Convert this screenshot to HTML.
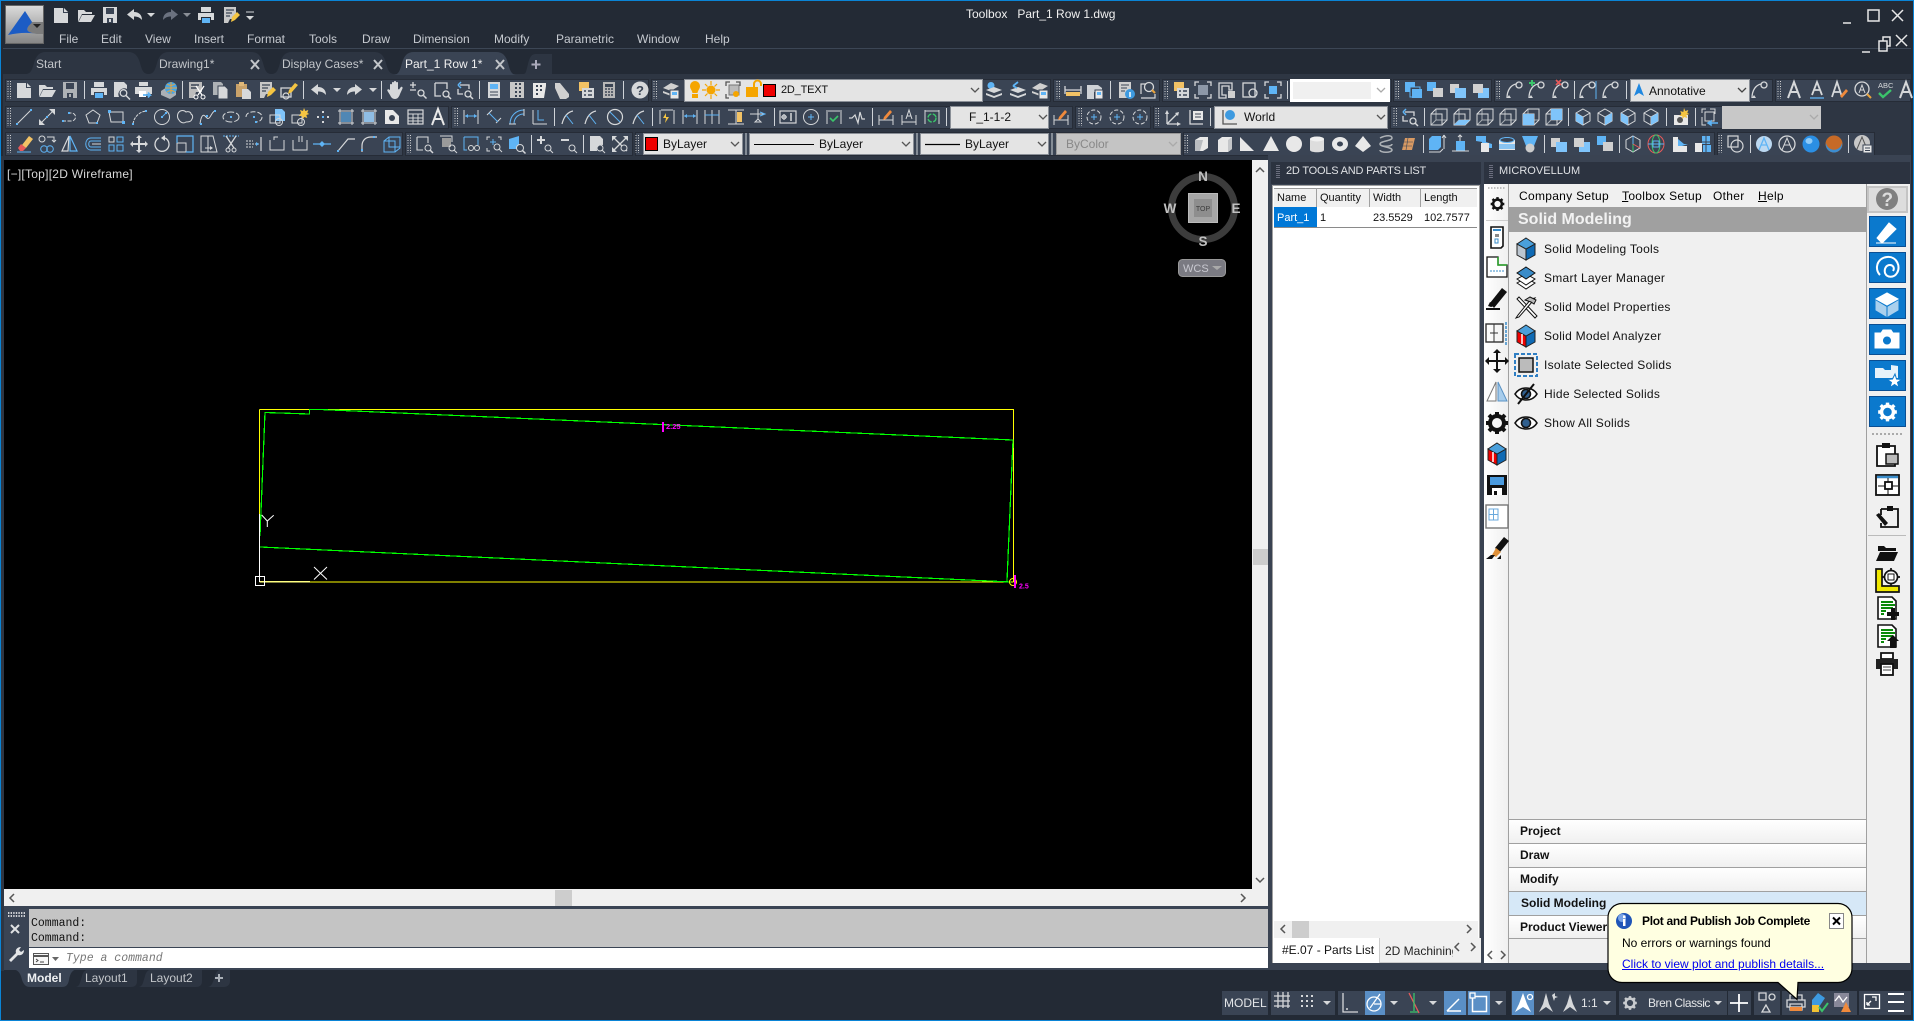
<!DOCTYPE html>
<html lang="en"><head><meta charset="utf-8"><title>Toolbox Part_1 Row 1.dwg</title>
<style>
html,body{margin:0;padding:0;background:#232a35}
#r{position:relative;width:1914px;height:1021px;overflow:hidden;background:#232a35;font:12px/16px "Liberation Sans",sans-serif;color:#d0d3d8}
#r div{position:absolute;box-sizing:border-box}
.t{white-space:nowrap;height:16px}
.tb{background:#3a4454;border:1px solid #262c37;height:23px}
.c{background:#e4e4e4;border:1px solid #8a8f97}
.b{background:linear-gradient(#fff,#f0f0f0);border-top:1px solid #a0a0a0;left:1509px;width:357px;height:24px}
.bb{font-weight:bold;color:#111;left:1520px}
.ml{color:#c6cad0}
.li{color:#111;left:1544px;letter-spacing:.27px}
.th{color:#111;font-size:11px}
.mb{color:#000;top:188px;letter-spacing:.3px}
.bl{background:#0b79cd;border:1px solid #0a4f93;left:1869px;width:37px;height:31px}
.st{background:#3a4454;top:991px;height:24px}
.act{background:#5a8fc6;top:991px;height:24px}
svg{position:absolute;left:0;top:0}
</style></head><body><div id="r">
<!-- frame -->
<div style="left:0;top:0;width:1914px;height:1021px;border:1px solid #0a84d6;z-index:9;pointer-events:none"></div>
<!-- top areas -->
<div style="left:3px;top:48px;width:1908px;height:1px;background:#3c4655"></div>
<div style="left:3px;top:74px;width:1908px;height:86px;background:#2e3643"></div>
<!-- toolbars row 1 -->
<div class="tb" style="left:5px;top:79px;width:644px"></div>
<div class="tb" style="left:651px;top:79px;width:400px"></div>
<div class="tb" style="left:1053px;top:79px;width:107px"></div>
<div class="tb" style="left:1162px;top:79px;width:230px"></div>
<div class="tb" style="left:1393px;top:79px;width:99px"></div>
<div class="tb" style="left:1494px;top:79px;width:279px"></div>
<div class="tb" style="left:1775px;top:79px;width:136px"></div>
<div class="c" style="left:684px;top:79px;width:299px;height:23px"></div>
<div style="left:1290px;top:79px;width:100px;height:23px;background:#fff"></div>
<div style="left:1293px;top:82px;width:78px;height:17px;background:#f0f0f0"></div>
<div class="c" style="left:1630px;top:79px;width:120px;height:23px"></div>
<!-- row 2 -->
<div class="tb" style="left:5px;top:106px;width:444px"></div>
<div class="tb" style="left:451px;top:106px;width:622px"></div>
<div class="tb" style="left:1075px;top:106px;width:76px"></div>
<div class="tb" style="left:1153px;top:106px;width:235px"></div>
<div class="tb" style="left:1390px;top:106px;width:431px"></div>
<div class="c" style="left:950px;top:106px;width:99px;height:23px"></div>
<div class="c" style="left:1214px;top:106px;width:174px;height:23px"></div>
<div style="left:1722px;top:106px;width:99px;height:23px;background:#c8c8c8"></div>
<!-- row 3 -->
<div class="tb" style="left:5px;top:132px;width:398px;height:24px"></div>
<div class="tb" style="left:405px;top:132px;width:228px;height:24px"></div>
<div class="tb" style="left:635px;top:132px;width:546px;height:24px"></div>
<div class="tb" style="left:1183px;top:132px;width:532px;height:24px"></div>
<div class="tb" style="left:1717px;top:132px;width:158px;height:24px"></div>
<div class="c" style="left:643px;top:133px;width:100px;height:22px"></div>
<div class="c" style="left:749px;top:133px;width:165px;height:22px"></div>
<div class="c" style="left:920px;top:133px;width:129px;height:22px"></div>
<div style="left:1056px;top:133px;width:125px;height:22px;background:#c4c4c4;border:1px solid #999"></div>
<!-- canvas -->
<div style="left:1px;top:156px;width:3px;height:815px;background:#2e3643"></div>
<div style="left:4px;top:160px;width:1248px;height:729px;background:#000"></div>
<div style="left:1252px;top:160px;width:16px;height:729px;background:#f0f0f0"></div>
<div style="left:1253px;top:549px;width:15px;height:16px;background:#cdcdcd"></div>
<div style="left:4px;top:889px;width:1264px;height:17px;background:#f0f0f0"></div>
<div style="left:555px;top:890px;width:17px;height:16px;background:#cdcdcd"></div>
<!-- command -->
<div style="left:4px;top:906px;width:1264px;height:64px;background:#3a4454"></div>
<div style="left:29px;top:909px;width:1239px;height:38px;background:#c4c4c4"></div>
<div style="left:29px;top:948px;width:1239px;height:20px;background:#fff"></div>
<!-- right panels base -->
<div style="left:1268px;top:155px;width:643px;height:815px;background:#3a4352"></div>
<div style="left:1271px;top:162px;width:210px;height:22px;background:#2c3340"></div>
<div style="left:1484px;top:162px;width:426px;height:22px;background:#2c3340"></div>
<!-- parts list -->
<div style="left:1272px;top:185px;width:208px;height:778px;background:#fff;border:1px solid #a0a0a0;border-bottom:0"></div>
<div style="left:1274px;top:188px;width:203px;height:19px;background:#f0f0f0;border-top:1px solid #999"></div>
<div style="left:1316px;top:188px;width:1px;height:19px;background:#a0a0a0"></div>
<div style="left:1369px;top:188px;width:1px;height:19px;background:#a0a0a0"></div>
<div style="left:1420px;top:188px;width:1px;height:19px;background:#a0a0a0"></div>
<div style="left:1274px;top:207px;width:43px;height:20px;background:#0078d7"></div>
<div style="left:1274px;top:227px;width:203px;height:1px;background:#8a8a8a"></div>
<div style="left:1274px;top:921px;width:204px;height:17px;background:#f0f0f0"></div>
<div style="left:1292px;top:921px;width:17px;height:17px;background:#cdcdcd"></div>
<div style="left:1273px;top:938px;width:106px;height:25px;background:#fff"></div>
<div style="left:1379px;top:938px;width:102px;height:25px;background:#f0f0f0;border-left:1px solid #ccc;border-bottom:1px solid #ccc"></div>
<!-- microvellum -->
<div style="left:1484px;top:184px;width:25px;height:779px;background:linear-gradient(90deg,#fff,#f0f0f0);border-right:1px solid #a0a0a0"></div>
<div style="left:1509px;top:184px;width:357px;height:779px;background:#f0f0f0"></div>
<div style="left:1509px;top:207px;width:357px;height:25px;background:#a0a0a0"></div>
<div class="b" style="top:819px"></div>
<div class="b" style="top:843px"></div>
<div class="b" style="top:867px"></div>
<div class="b" style="top:891px;background:#d6e8f7"></div>
<div class="b" style="top:915px;border-bottom:1px solid #a0a0a0"></div>
<div style="left:1866px;top:184px;width:44px;height:779px;background:#f0f0f0;border-left:1px solid #a0a0a0"></div>
<div style="left:1867px;top:186px;width:41px;height:27px;background:#ddd;border:2px solid #c4c4c4"></div>
<div class="bl" style="top:216px"></div>
<div class="bl" style="top:252px"></div>
<div class="bl" style="top:288px"></div>
<div class="bl" style="top:324px"></div>
<div class="bl" style="top:360px"></div>
<div class="bl" style="top:396px"></div>
<div style="left:1868px;top:535px;width:38px;height:1px;background:#bbb"></div>
<div style="left:1486px;top:220px;width:22px;height:1px;background:#ccc"></div>
<!-- status -->
<div class="st" style="left:1222px;width:46px"></div>
<div class="st" style="left:1271px;width:64px"></div>
<div class="st" style="left:1338px;width:168px"></div>
<div class="st" style="left:1511px;width:105px"></div>
<div class="st" style="left:1619px;width:108px"></div>
<div class="st" style="left:1728px;width:23px"></div>
<div class="st" style="left:1754px;width:26px"></div>
<div class="st" style="left:1782px;width:75px"></div>
<div class="st" style="left:1859px;width:52px"></div>
<div class="act" style="left:1365px;width:20px"></div>
<div class="act" style="left:1444px;width:22px"></div>
<div class="act" style="left:1468px;width:22px"></div>
<div class="act" style="left:1512px;width:22px"></div>

<svg width="1914" height="1021" xmlns="http://www.w3.org/2000/svg" style="color:#d6d8da" fill="none">
<defs>
<g id="gr" transform="translate(-2 -9)"><path d="M1 0v18M3.500 0v18" stroke="#d8d8d8" stroke-width="1" stroke-dasharray="1 1.500"/></g>
<g id="s" transform="translate(-1 -9)"><path d="M.5 0v18" stroke="#cfd3d8"/></g>
<g id="dd" transform="translate(-10 -10)"><path d="M6 8h8l-4 4z" fill="currentColor"/></g>
<g id="ch" transform="translate(-10 -10)"><path d="M6 8l4 4 4-4" stroke="currentColor" stroke-width="1.300"/></g>
<g id="new" transform="translate(-10 -10)"><path fill="currentColor" d="M3 3h10l4 4v11H3z"/><path d="M12.500 3v4.500H17" stroke="#3a4454"/></g>
<g id="open" transform="translate(-10 -10)"><path fill="currentColor" d="M2 5h6l2 2h6v2H6l-4 8zM6 10h13l-4 7H2.500z"/></g>
<g id="save" transform="translate(-10 -10)"><path fill="currentColor" d="M3 2h14v16H3z"/><path fill="#3a4454" d="M6 3h8v6H6zM7 13h6v5H7z"/><path fill="currentColor" d="M9 14h2v3H9z"/></g>
<g id="print" transform="translate(-10 -10)"><path fill="currentColor" d="M5 2h10v5H5zM2 8h16v7h-3v-3H5v3H2z"/><rect x="6" y="13" width="8" height="5" fill="#5fb4f5"/></g>
<g id="prev" transform="translate(-10 -10)"><path fill="currentColor" d="M2 2h10l3 3v4a6 6 0 0 0-8 8H2z"/><circle cx="11.500" cy="13" r="3.300" stroke="currentColor" stroke-width="1.300"/><path d="M14 15.500l4 4" stroke="currentColor" stroke-width="1.500"/></g>
<g id="plot" transform="translate(-10 -10)"><path fill="currentColor" d="M5 2h9v4H5zM1 7h17v7H1z"/><rect x="5" y="11" width="7" height="6" fill="#fff"/><path d="M9 15h7l-2-2.500M16 15l-2 2.500" stroke="#5fb4f5" stroke-width="1.800"/></g>
<g id="pub" transform="translate(-10 -10)"><path fill="#aab0b6" d="M2 11l9-6 6 3v7l-6 4-9-4z"/><circle cx="12" cy="8" r="6" fill="#45a6e8"/><path d="M6 8h12M12 2v12M8 4c3 2 5 2 8 0M8 12c3-2 5-2 8 0" stroke="#e8a33c"/></g>
<g id="cut" transform="translate(-10 -10)"><path fill="#bdbdbd" d="M2 2h13v10H9l-2 6H2z"/><path d="M4 5h8M4 8h6" stroke="#3a4454" stroke-width="1.500"/><path d="M9 6l6 9M17 6l-6 9" stroke="#fff" stroke-width="1.300"/><circle cx="9" cy="17" r="2" stroke="#fff"/><circle cx="16" cy="17" r="2" stroke="#fff"/></g>
<g id="copy" transform="translate(-10 -10)"><path fill="#aeb2b6" d="M3 2h8l2 2v11H3z"/><path fill="currentColor" stroke="#3a4454" d="M8 6h7l3 3v10H8z"/></g>
<g id="paste" transform="translate(-10 -10)"><path fill="#c9a26a" d="M3 4h11v13H3z"/><path fill="#e0b878" d="M6 2h5v4H6z"/><path fill="currentColor" d="M9 9h6l3 3v7H9z"/></g>
<g id="match" transform="translate(-10 -10)"><path fill="#c8c8c8" d="M3 2h12v12H9l-2 4H3z"/><path d="M5 5h8M5 8h6M5 11h4" stroke="#3a4454" stroke-width="1.300"/><path fill="#f5c542" d="M11 12l5-5 3 3-5 5-4 2z"/></g>
<g id="bed" transform="translate(-10 -10)"><path d="M2 8h10v9H2z" stroke="currentColor" stroke-width="1.300"/><circle cx="7" cy="16" r="3" stroke="currentColor" stroke-width="1.200"/><path fill="#f5c542" d="M10 10l6-7 3 2-6 7-4 2z"/></g>
<g id="undo" transform="translate(-10 -10)"><path fill="currentColor" d="M9 4L2 9.500 9 15v-3.500c3 0 5.500.5 8 3.500 0-5-3-8-8-8z"/></g>
<g id="redo" transform="translate(10 -10) scale(-1 1)"><path fill="currentColor" d="M9 4L2 9.500 9 15v-3.500c3 0 5.500.5 8 3.500 0-5-3-8-8-8z"/></g>
<g id="pan" transform="translate(-10 -10)"><path fill="currentColor" d="M5 10V5c0-1.500 2-1.500 2 0v3V3c0-1.500 2-1.500 2 0v5-6c0-1.500 2-1.500 2 0v6-5c0-1.500 2-1.500 2 0v6l1 .5 1.500-2c1-1.500 2.500-.5 2 1L15 14c-1 3-2.500 5-5 5-3 0-4-2-5-4l-2.500-4c-.8-1.500 1-2.500 2-1.200z"/></g>
<g id="zrt" transform="translate(-10 -10)"><path d="M5 2v6M2 5h6M2 10h6" stroke="currentColor" stroke-width="1.300"/><circle cx="13" cy="13" r="3" stroke="currentColor" stroke-width="1.300"/><path d="M15.500 15.500l3 3" stroke="currentColor" stroke-width="1.500"/></g>
<g id="zwin" transform="translate(-10 -10)"><path d="M3 3h12v6M3 3v13h6" stroke="currentColor" stroke-width="1.300"/><circle cx="14" cy="14" r="3" stroke="currentColor" stroke-width="1.300"/><path d="M16 16l3 3" stroke="currentColor" stroke-width="1.500"/></g>
<g id="zpr" transform="translate(-10 -10)"><path d="M5 5h9v4M3 9V14h5" stroke="currentColor" stroke-width="1.300"/><path d="M3 5l3-3M3 5l3 3" stroke="#5fb4f5" stroke-width="1.500"/><circle cx="13" cy="14" r="3" stroke="currentColor" stroke-width="1.300"/><path d="M15 16l3 3" stroke="currentColor" stroke-width="1.500"/></g>
<g id="prp" transform="translate(-10 -10)"><rect x="4" y="2" width="12" height="16" fill="#d6d8da"/><rect x="6" y="4" width="8" height="5" fill="#5fb4f5"/><path d="M6 12h8M6 15h8" stroke="#3a4454"/></g>
<g id="dc" transform="translate(-10 -10)"><rect x="3" y="2" width="14" height="16" fill="#c8c8c8"/><path d="M8 4h2M12 4h2M8 8h2M12 8h2M8 12h2M12 12h2M8 16h2M12 16h2" stroke="#3a4454" stroke-width="2"/></g>
<g id="tp" transform="translate(-10 -10)"><path fill="#e8e8e8" d="M3 3h13v3l-2 12H3z"/><path d="M6 6h2M10 6h2M6 10h2M10 10h2M6 14h2" stroke="#3a4454" stroke-width="2"/></g>
<g id="sh" transform="translate(-10 -10)"><path fill="#d0d0d0" d="M3 3h5l9 11v3l-3 2H8L3 8z"/></g>
<g id="mk" transform="translate(-10 -10)"><rect x="3" y="2" width="10" height="9" fill="#f2c265"/><rect x="6" y="8" width="12" height="10" fill="#d6d8da"/><path d="M8 11h2M12 11h4M8 15h2M12 15h4" stroke="#3a4454" stroke-width="1.500"/></g>
<g id="calc" transform="translate(-10 -10)"><rect x="4" y="2" width="12" height="16" fill="#b8b8b8"/><rect x="6" y="4" width="8" height="3" fill="#3a4454"/><path d="M6 9h2M9 9h2M12 9h2M6 12h2M9 12h2M12 12h2M6 15h2M9 15h2M12 15h2" stroke="#3a4454" stroke-width="1.500"/></g>
<g id="lyr" transform="translate(-10 -10)"><path fill="#d0d0d0" d="M2 8l8-5 8 3-8 5zM2 11l8 3 0 2-8-3z"/><rect x="9" y="10" width="9" height="9" fill="#e8e8e8" stroke="#3a4454"/><rect x="11" y="12" width="5" height="3" fill="#5fb4f5"/></g>
<g id="lyb" transform="translate(-10 -10)"><path fill="#5fb4f5" d="M7 2a3 3 0 1 1 0 7 3 3 0 1 1 0-7z"/><path fill="currentColor" d="M2 10l8-3 8 3-8 3zM2 13l8 3 8-3v2l-8 3-8-3z"/></g>
<g id="lyp" transform="translate(-10 -10)"><path fill="currentColor" d="M2 10l8-3 8 3-8 3zM2 13l8 3 8-3v2l-8 3-8-3z"/><path d="M5 6l5-4M5 6l4 2" stroke="#5fb4f5" stroke-width="1.800"/></g>
<g id="ruler" transform="translate(-10 -10)"><path d="M2 6v8M18 6v8M2 10h16" stroke="currentColor" stroke-width="1.300"/><rect x="3" y="12" width="14" height="4" fill="#f2c265"/></g>
<g id="cube2" transform="translate(-10 -10)"><path d="M2 5h11l4 3v4H9v7H2z" fill="#cfd2d6"/><rect x="10" y="10" width="8" height="9" fill="#e8e8e8" stroke="#3a4454"/><rect x="12" y="12" width="4" height="3" fill="#5fb4f5"/></g>
<g id="info" transform="translate(-10 -10)"><path fill="#d0d0d0" d="M3 2h12v9a5 5 0 0 0-4 7H3z"/><path d="M5 5h8M5 8h6M5 11h4" stroke="#3a4454"/><circle cx="14" cy="14" r="5" fill="#3d9ae0"/><path d="M14 12v5" stroke="#fff" stroke-width="1.500"/></g>
<g id="q" transform="translate(-10 -10)"><path d="M3 14V4h5M3 18h14v-4" stroke="currentColor" stroke-width="1.200"/><circle cx="11" cy="7" r="4.500" stroke="currentColor" stroke-width="1.300"/><path d="M14 10l3 3" stroke="#e8a33c" stroke-width="2"/></g>
<g id="fr" transform="translate(-10 -10)"><path d="M2 6V2h4M14 2h4v4M2 14v4h4M14 18h4v-4" stroke="currentColor" stroke-width="1.300"/><rect x="5" y="5" width="10" height="10" fill="#8d98a8"/></g>
<g id="fr2" transform="translate(-10 -10)"><path d="M2 3h13v7h-3V6H5v9h4v3H2z" stroke="currentColor" stroke-width="1.300"/><rect x="11" y="11" width="7" height="7" fill="#d0d0d0"/></g>
<g id="fr3" transform="translate(-10 -10)"><rect x="3" y="3" width="12" height="14" stroke="currentColor" stroke-width="1.300"/><circle cx="13" cy="13" r="4" stroke="currentColor" stroke-width="1.300"/></g>
<g id="fr4" transform="translate(-10 -10)"><path d="M2 6V2h4M14 2h4v4M2 14v4h4M14 18h4v-4" stroke="currentColor" stroke-width="1.300"/><rect x="6" y="6" width="8" height="8" fill="#5fb4f5"/></g>
<g id="ord1" transform="translate(-10 -10)"><rect x="2" y="2" width="10" height="10" fill="#5fb4f5"/><rect x="7" y="7" width="10" height="10" fill="#3a4454" stroke="#5fb4f5"/><rect x="9" y="9" width="10" height="9" fill="#5fb4f5"/></g>
<g id="ord2" transform="translate(-10 -10)"><rect x="2" y="2" width="9" height="9" fill="#5fb4f5"/><rect x="8" y="8" width="10" height="9" fill="#d0d0d0"/></g>
<g id="ord3" transform="translate(-10 -10)"><rect x="2" y="4" width="9" height="9" fill="#d0d0d0"/><rect x="7" y="8" width="11" height="10" fill="#7fc4fa"/></g>
<g id="ord4" transform="translate(-10 -10)"><rect x="7" y="8" width="11" height="10" fill="#7fc4fa"/><rect x="2" y="4" width="10" height="9" fill="#d0d0d0"/></g>
<g id="pm" transform="translate(-10 -10)"><path d="M2 18c0-8 4-13 9-14" stroke="currentColor" stroke-width="1.300"/><circle cx="14" cy="5" r="3" stroke="currentColor" stroke-width="1.300"/><path d="M2 18l2-3 2 3z" fill="currentColor"/></g>
<g id="A" transform="translate(-10 -10)"><path d="M4 18L10 2l6 16M6 12h8" stroke="currentColor" stroke-width="2"/></g>
<g id="Au" transform="translate(-10 -10)"><path d="M5 15L10 2l5 13M7 10h6" stroke="currentColor" stroke-width="1.800"/><path d="M3 18h14" stroke="#5fb4f5" stroke-width="1.300"/></g>
<g id="Ap" transform="translate(-10 -10)"><path d="M3 17L8 2l5 15M5 12h6" stroke="currentColor" stroke-width="1.800"/><path d="M11 16l6-7 2 2-6 7z" fill="#f08a3c"/></g>
<g id="Am" transform="translate(-10 -10)"><circle cx="9" cy="9" r="7" stroke="currentColor" stroke-width="1.300"/><path d="M6 13l3-8 3 8M7 10h4" stroke="currentColor"/><path d="M14 14l4 4" stroke="#e8a33c" stroke-width="2"/></g>
<g id="abc" transform="translate(-10 -10)"><text x="3" y="8" font-family="Liberation Sans" font-size="7.500" fill="currentColor">ABC</text><path d="M4 13l4 4 8-7" stroke="#3bc46b" stroke-width="2.400"/></g>
<g id="line" transform="translate(-10 -10)"><path d="M3 17L17 3" stroke="currentColor"/><path d="M2 16h2v2H2zM16 2h2v2h-2z" fill="#5fb4f5"/></g>
<g id="xl" transform="translate(-10 -10)"><path d="M4 16L16 4" stroke="currentColor"/><path d="M2 18v-6l6 6zM18 2v6l-6-6z" fill="currentColor"/><path d="M9 9h2v2H9z" fill="#5fb4f5"/></g>
<g id="pl" transform="translate(-10 -10)"><path d="M2 14h9c6 0 6-8 0-8H9" stroke="currentColor" stroke-dasharray="4 1.500"/><path d="M2 13h2v2H2zM8 5h2v2H8z" fill="#5fb4f5"/></g>
<g id="pg" transform="translate(-10 -10)"><path d="M10 3l7 5-3 8H6L3 8z" stroke="currentColor"/><path d="M13 15h2v2h-2z" fill="#5fb4f5"/></g>
<g id="rc" transform="translate(-10 -10)"><path d="M3 5h14v10H5z" stroke="currentColor"/><path d="M2 3h3v3H2zM16 14h3v3h-3z" fill="#5fb4f5"/></g>
<g id="ar" transform="translate(-10 -10)"><path d="M3 17C4 10 9 5 16 4" stroke="currentColor" stroke-dasharray="3 1"/><path d="M2 16h2v2H2zM15 3h2v2h-2z" fill="#5fb4f5"/></g>
<g id="cr" transform="translate(-10 -10)"><circle cx="10" cy="10" r="7.500" stroke="currentColor"/><path d="M10 10l4-4" stroke="#5fb4f5"/><path d="M9 9h2v2H9zM13 5h2v2h-2z" fill="#5fb4f5"/></g>
<g id="cl" transform="translate(-10 -10)"><path d="M4 5c2-2 5-2 7 0 2-1 5 0 5 2 2 1 2 4 1 5-1 3-4 3-6 3-3 2-6 0-7-2-2-2-2-6 0-8z" stroke="currentColor"/></g>
<g id="sp" transform="translate(-10 -10)"><path d="M2 17c1-8 3-10 5-8s3 4 5 1 3-6 5-6" stroke="currentColor"/><path d="M2 16h2v2H2zM8 8h2v2H8zM16 3h2v2h-2z" fill="#5fb4f5"/></g>
<g id="el" transform="translate(-10 -10)"><ellipse cx="10" cy="10" rx="8" ry="5" stroke="currentColor" stroke-dasharray="7 2"/><path d="M9 9h2v2H9z" fill="#5fb4f5"/></g>
<g id="ea" transform="translate(-10 -10)"><path d="M2 10c0-7 16-7 16 0 0 3-3 5-6 5" stroke="currentColor" stroke-dasharray="5 2"/><path d="M9 9h2v2H9zM11 14h2v2h-2z" fill="#5fb4f5"/></g>
<g id="bi" transform="translate(-10 -10)"><path fill="#7fc4fa" d="M7 2h7l3 3v9H7z"/><rect x="2" y="8" width="10" height="8" stroke="currentColor"/><circle cx="11" cy="15" r="3.500" stroke="currentColor"/></g>
<g id="bm" transform="translate(-10 -10)"><rect x="2" y="8" width="10" height="8" stroke="currentColor"/><circle cx="11" cy="15" r="3.500" stroke="currentColor"/><path fill="#f5c542" d="M14 1l1.300 3 3-1-1 3 2 1-3 1 1 3-3-1-1.300 2-1-3-3 0 2-3-1-3 3 1z"/></g>
<g id="pt" transform="translate(-10 -10)"><path d="M9 4h2v2H9zM9 14h2v2H9zM4 9h2v2H4zM14 9h2v2h-2z" fill="currentColor"/><path d="M9 9h2v2H9z" fill="#5fb4f5"/></g>
<g id="ht" transform="translate(-10 -10)"><path d="M2 4h16M2 16h16M4 2v16M16 2v16" stroke="currentColor"/><path fill="#5fb4f5" opacity=".6" d="M5 5h10v10H5z"/></g>
<g id="gd" transform="translate(-10 -10)"><path d="M2 4h16M2 16h16M4 2v16M16 2v16" stroke="currentColor"/><rect x="5" y="5" width="10" height="10" fill="#8fbde4"/></g>
<g id="rg" transform="translate(-10 -10)"><path d="M3 3h8l6 6v8H3z" fill="#e8e8e8"/><circle cx="10" cy="11" r="3" fill="#3a4454"/></g>
<g id="tbl" transform="translate(-10 -10)"><rect x="3" y="3" width="15" height="14" stroke="currentColor" stroke-width="1.200"/><path d="M3 7h15M3 11h15M3 14h15M8 7v10M13 7v10" stroke="currentColor"/></g>
<g id="dl" transform="translate(-10 -10)"><path d="M3 3v14M17 3v14" stroke="currentColor"/><path d="M4 9h12" stroke="#5fb4f5"/><path d="M4 9l3-2v4zM16 9l-3-2v4z" fill="#5fb4f5"/></g>
<g id="da" transform="translate(-10 -10)"><path d="M3 8l5-5M12 16l5-5" stroke="currentColor"/><path d="M5 6l9 9" stroke="#5fb4f5"/></g>
<g id="dr" transform="translate(-10 -10)"><path d="M3 17C3 9 9 3 17 3M7 17C7 11 11 7 17 7" stroke="#5fb4f5"/><path d="M2 17h7M17 2v7" stroke="currentColor"/></g>
<g id="do" transform="translate(-10 -10)"><path d="M3 17h14M3 17V3" stroke="currentColor"/><path d="M8 3v10h6" stroke="#5fb4f5"/></g>
<g id="dra" transform="translate(-10 -10)"><path d="M3 17C5 9 9 5 14 4" stroke="currentColor" stroke-width="1.200"/><path d="M7 8l7 9" stroke="#5fb4f5"/></g>
<g id="dd2" transform="translate(-10 -10)"><circle cx="10" cy="10" r="7.500" stroke="currentColor" stroke-width="1.200"/><path d="M5 5l10 10" stroke="#5fb4f5"/></g>
<g id="dq" transform="translate(-10 -10)"><path d="M3 3v14M17 3v14M4 3h12" stroke="currentColor"/><path d="M9 6l-3 5h3l-1 5 4-6H9z" fill="#f5c542"/></g>
<g id="db" transform="translate(-10 -10)"><path d="M3 3v14M10 3v14M17 3v14" stroke="currentColor"/><path d="M3 8h14" stroke="#5fb4f5"/></g>
<g id="ds" transform="translate(-10 -10)"><path d="M2 3h16M2 17h16" stroke="currentColor"/><path d="M10 3v14" stroke="currentColor"/><rect x="11" y="5" width="5" height="10" fill="#f2c265"/></g>
<g id="dbk" transform="translate(-10 -10)"><path d="M2 7h14M10 2v10M10 12l-3 3h6z" stroke="currentColor"/><path d="M12 5l5 2-5 2" stroke="#5fb4f5"/></g>
<g id="tol" transform="translate(-10 -10)"><rect x="2" y="4" width="16" height="12" stroke="currentColor" stroke-width="1.200"/><path d="M6 7v6M3 10h6" stroke="currentColor"/><circle cx="6" cy="10" r="2" stroke="currentColor"/><path d="M13 6v8" stroke="currentColor" stroke-width="1.500"/></g>
<g id="ctr" transform="translate(-10 -10)"><circle cx="10" cy="10" r="7.500" stroke="currentColor"/><path d="M10 7v6M7 10h6" stroke="#5fb4f5"/></g>
<g id="dck" transform="translate(-10 -10)"><path d="M3 3v14M17 3v14M4 4h12" stroke="currentColor"/><path d="M6 11l3 3 5-5" stroke="#3bc46b" stroke-width="1.600"/></g>
<g id="wav" transform="translate(-10 -10)"><path d="M2 11h3l3-3 3 8 2-11 2 7h3" stroke="currentColor" stroke-width="1.200"/></g>
<g id="dp" transform="translate(-10 -10)"><path d="M3 8v10M17 8v10M3 13h14" stroke="currentColor"/><path d="M8 10l6-7 2 2-6 7-3 1z" fill="#f08a3c"/></g>
<g id="dA" transform="translate(-10 -10)"><path d="M3 8v10M17 8v10M3 15h14" stroke="currentColor"/><path d="M7 12l3-9 3 9M8 9h4" stroke="currentColor"/></g>
<g id="dg" transform="translate(-10 -10)"><path d="M3 3v14M17 3v14M3 4h14" stroke="currentColor"/><circle cx="10" cy="11" r="4" stroke="#3bc46b" stroke-width="1.400" stroke-dasharray="5 1.500"/></g>
<g id="ducs" transform="translate(-10 -10)"><circle cx="10" cy="10" r="7" stroke="currentColor" stroke-dasharray="4 2"/><path d="M10 7v6M7 10h6" stroke="#5fb4f5"/></g>
<g id="ucs" transform="translate(-10 -10)"><path d="M4 17V6M4 17h12" stroke="currentColor" stroke-width="1.300"/><path d="M4 17l10-10" stroke="currentColor" stroke-width="1.300"/><path d="M4 3L2 7h4zM18 17l-4-2v4zM16 5l-4 1 3 3z" fill="currentColor"/></g>
<g id="ucm" transform="translate(-10 -10)"><path d="M4 3v14h13" stroke="currentColor" stroke-width="1.300"/><rect x="7" y="4" width="10" height="9" fill="#e8e8e8"/><path d="M9 7h6M9 10h6" stroke="#3a4454"/></g>
<g id="w" transform="translate(-10 -10)"><path d="M4 3v14h14" stroke="currentColor" stroke-width="1.300"/><circle cx="11" cy="8" r="5" fill="#3d9ae0"/></g>
<g id="v1" transform="translate(-10 -10)"><path d="M2 7h11v11H2zM2 7l5-5h11v11l-5 5" stroke="currentColor"/><path d="M7 2v11H18M7 13l-5 5" stroke="currentColor" opacity=".7"/></g>
<g id="v2" transform="translate(-10 -10)"><use href="#v1" x="10" y="10"/><path fill="#7fc4fa" d="M2 18l5-5h11l-5 5z"/></g>
<g id="v3" transform="translate(-10 -10)"><use href="#v1" x="10" y="10"/><path fill="#7fc4fa" d="M2 7h11v11H2z"/></g>
<g id="v4" transform="translate(-10 -10)"><use href="#v1" x="10" y="10"/><path fill="#7fc4fa" d="M7 2h11v11H7z"/></g>
<g id="iso" transform="translate(-10 -10)"><path d="M10 2l7 4v8l-7 4-7-4V6z" stroke="currentColor"/><path d="M3 6l7 4 7-4M10 10v8" stroke="currentColor"/></g>
<g id="iso2" transform="translate(-10 -10)"><use href="#iso" x="10" y="10"/><path fill="#7fc4fa" d="M3 6l7 4v8l-7-4z"/></g>
<g id="iso3" transform="translate(-10 -10)"><use href="#iso" x="10" y="10"/><path fill="#7fc4fa" d="M17 6l-7 4v8l7-4z"/></g>
<g id="cam" transform="translate(-10 -10)"><rect x="4" y="8" width="14" height="10" fill="#e8e8e8"/><circle cx="10" cy="13" r="3" fill="#555"/><path fill="#f5c542" d="M14 1l1.300 3 3-1-1 3 2 1-3 1 1 3-3-1-2 2v-3l-3 0 2-2-1-3 3 1z"/></g>
<g id="vp" transform="translate(-10 -10)"><path d="M2 6V2h4M10 2h5v5M2 10v8h4" stroke="currentColor"/><rect x="5" y="5" width="9" height="9" stroke="currentColor"/><path d="M8 16h10M8 16l3-2v4z" stroke="#5fb4f5" stroke-width="1.500"/></g>
<g id="er" transform="translate(-10 -10)"><path d="M3 18h14" stroke="#5fb4f5"/><path fill="#f2c265" d="M8 11L15 2l4 3-7 9z"/><path fill="#e85a5a" d="M4 14l3-4 5 4-3 3H6z"/></g>
<g id="cp" transform="translate(-10 -10)"><circle cx="5" cy="5" r="3" stroke="currentColor"/><path d="M10 3h7v5M15 6l2 2 2-2" stroke="currentColor"/><circle cx="7" cy="15" r="3.300" stroke="#5fb4f5"/><circle cx="13" cy="15" r="3.300" stroke="#5fb4f5"/></g>
<g id="mi" transform="translate(-10 -10)"><path d="M10 2L3 17h6z" stroke="currentColor" stroke-width="1.200"/><path d="M11 2l7 15h-7z" fill="none" stroke="#5fb4f5" stroke-width="1.200"/></g>
<g id="of" transform="translate(-10 -10)"><path d="M18 4H8c-7 0-7 12 0 12h10M18 7H8c-3 0-3 6 0 6h10" stroke="#5fb4f5"/><path d="M18 10H9" stroke="currentColor"/></g>
<g id="ay" transform="translate(-10 -10)"><path d="M3 3h5v5H3zM11 3h6v5h-6zM3 11h5v6H3zM11 11h6v6h-6z" stroke="#5fb4f5"/><path d="M3 3h5v5H3z" stroke="currentColor"/></g>
<g id="mv" transform="translate(-10 -10)"><path fill="currentColor" d="M10 1l3 3h-2v5h5V7l3 3-3 3v-2h-5v5h2l-3 3-3-3h2v-5H4v2l-3-3 3-3v2h5V4H7z"/></g>
<g id="ro" transform="translate(-10 -10)"><path d="M13 4a7 7 0 1 1-6 0" stroke="currentColor" stroke-width="1.300"/><path d="M13 1v6l-4-3z" fill="currentColor"/></g>
<g id="sc" transform="translate(-10 -10)"><rect x="2" y="9" width="9" height="9" stroke="currentColor"/><path d="M2 9V2h16v16h-7" stroke="#5fb4f5" stroke-width="1.200"/></g>
<g id="st" transform="translate(-10 -10)"><path d="M3 2h7v16H3zM10 2h5l4 16h-9" stroke="currentColor"/><path d="M7 14h7" stroke="#d6d8da"/><path d="M12 12l3 2-3 2z" fill="currentColor"/></g>
<g id="tr" transform="translate(-10 -10)"><path d="M2 2h16" stroke="#5fb4f5" stroke-dasharray="2 1"/><path d="M5 2l8 12M15 2L7 14" stroke="currentColor" stroke-width="1.300"/><circle cx="7" cy="16" r="2" stroke="currentColor"/><circle cx="13" cy="16" r="2" stroke="currentColor"/></g>
<g id="ex" transform="translate(-10 -10)"><path d="M17 3v14" stroke="currentColor" stroke-width="1.200"/><path d="M2 10h13M2 7h7M2 13h7" stroke="currentColor" stroke-dasharray="2 1"/><path d="M15 10l-3-2v4z" fill="#5fb4f5"/></g>
<g id="br" transform="translate(-10 -10)"><path d="M3 6v10h14V6M7 6V3h4" stroke="currentColor"/></g>
<g id="br2" transform="translate(-10 -10)"><path d="M3 6v10h14V6M9 2v6M12 2v6" stroke="currentColor"/></g>
<g id="jn" transform="translate(-10 -10)"><path d="M1 10h18" stroke="#5fb4f5" stroke-width="1.200"/><path d="M7 10l3-3v6zM13 10l-3-3v6z" fill="#5fb4f5"/></g>
<g id="cf" transform="translate(-10 -10)"><path d="M2 17l10-12h7" stroke="currentColor" stroke-width="1.200"/><path d="M1 16h2v2H1z" fill="#5fb4f5"/></g>
<g id="fl" transform="translate(-10 -10)"><path d="M3 18V12C3 6 7 3 12 3h6" stroke="currentColor" stroke-width="1.200"/><path d="M2 15h2v2H2zM14 2h2v2h-2z" fill="#5fb4f5"/></g>
<g id="xp" transform="translate(-10 -10)"><path d="M2 7h11v11H2zM2 7l5-4h11v11l-5 4" stroke="#5fb4f5"/><path d="M7 3v10h11" stroke="#5fb4f5"/></g>
<g id="zo" transform="translate(-10 -10)"><path d="M3 3h11v6M3 3v13h6" stroke="currentColor" stroke-width="1.100"/><circle cx="14" cy="14" r="3" stroke="currentColor"/><path d="M16 16l3 3" stroke="currentColor" stroke-width="1.500"/></g>
<g id="zo2" transform="translate(-10 -10)"><path d="M2 2h12v6" stroke="currentColor"/><rect x="4" y="4" width="9" height="9" fill="#9a9a9a"/><circle cx="14" cy="14" r="3" stroke="currentColor"/><path d="M16 16l3 3" stroke="currentColor"/></g>
<g id="zo3" transform="translate(-10 -10)"><path d="M3 3h14v8M3 3v13h3" stroke="#5fb4f5"/><circle cx="10" cy="14" r="2.500" stroke="currentColor"/><circle cx="16" cy="14" r="2.500" stroke="currentColor"/></g>
<g id="zo4" transform="translate(-10 -10)"><path d="M3 6V3h3M14 3h3v3M3 14v3h3" stroke="currentColor"/><path d="M9 5v6M6 8h6" stroke="#5fb4f5"/><circle cx="13" cy="13" r="3" stroke="currentColor"/><path d="M15 15l3 3" stroke="currentColor"/></g>
<g id="zo5" transform="translate(-10 -10)"><path fill="#5fb4f5" d="M2 5l10-3v13H2z"/><circle cx="13" cy="14" r="3.500" fill="#3a4454" stroke="currentColor"/><path d="M15.500 16.500l3 3" stroke="currentColor" stroke-width="1.500"/></g>
<g id="zp" transform="translate(-10 -10)"><path d="M6 2v8M2 6h8" stroke="currentColor" stroke-width="2"/><circle cx="13" cy="14" r="3" stroke="currentColor"/><path d="M15 16l3 3" stroke="currentColor"/></g>
<g id="zm" transform="translate(-10 -10)"><path d="M2 6h8" stroke="currentColor" stroke-width="2"/><circle cx="13" cy="14" r="3" stroke="currentColor"/><path d="M15 16l3 3" stroke="currentColor"/></g>
<g id="zd" transform="translate(-10 -10)"><path fill="currentColor" d="M3 2h10l3 3v6a5 5 0 0 0-6 6H3z"/><circle cx="13" cy="14" r="3" stroke="currentColor"/><path d="M15 16l3 3" stroke="currentColor"/></g>
<g id="zx" transform="translate(-10 -10)"><path d="M3 3l14 14M17 3L3 17" stroke="currentColor" stroke-width="1.300"/><path d="M2 2h5l-5 5zM18 2v5l-5-5zM2 18v-5l5 5z" fill="currentColor"/><circle cx="14" cy="14" r="3" fill="#3a4454" stroke="currentColor"/></g>
<g id="b1" transform="translate(-10 -10)"><path fill="#e8e8e8" d="M3 6l5-3h8v11l-5 3H3z"/><path fill="#b9bcc0" d="M11 6H3v11h5z"/></g>
<g id="b2" transform="translate(-10 -10)"><path fill="#e8e8e8" d="M3 6l4-3h10v12l-4 3H3z"/><path fill="#c4c6c9" d="M13 6v12l4-3V3z"/></g>
<g id="wd" transform="translate(-10 -10)"><path fill="#e8e8e8" d="M3 3l14 14H3z"/></g>
<g id="cn" transform="translate(-10 -10)"><path fill="#e8e8e8" d="M10 2l8 15H2z"/></g>
<g id="sph" transform="translate(-10 -10)"><circle cx="10" cy="10" r="8" fill="#e8e8e8"/></g>
<g id="cy" transform="translate(-10 -10)"><path fill="#ddd" d="M3 5h14v11c0 3-14 3-14 0z"/><ellipse cx="10" cy="5" rx="7" ry="2.500" fill="#f0f0f0"/></g>
<g id="to" transform="translate(-10 -10)"><ellipse cx="10" cy="10" rx="8" ry="7" fill="#e8e8e8"/><ellipse cx="10" cy="10" rx="3" ry="2.500" fill="#3a4454"/></g>
<g id="py" transform="translate(-10 -10)"><path fill="#e8e8e8" d="M10 2l8 10-8 6-8-6z"/></g>
<g id="hx" transform="translate(-10 -10)"><path d="M4 4c6-3 12-3 12 0s-12 3-12 6 12 3 12 0M4 10c0 3 12 3 12 6s-12 3-12 0" stroke="#aeb2b6" stroke-width="1.500"/></g>
<g id="ps" transform="translate(-10 -10)"><path fill="#d99a63" d="M6 4h10l-3 12H3z"/><path d="M5 8h9M4 12h9M9 4l-2 12" stroke="#3a4454" stroke-width=".6"/></g>
<g id="ext" transform="translate(-10 -10)"><path fill="#5fb4f5" d="M2 5l3-3h9v11l-3 3H2z"/><path d="M2 18h11l3-3M17 1v14M17 1l-2 3M17 1l2 3" stroke="currentColor"/></g>
<g id="plp" transform="translate(-10 -10)"><path fill="#5fb4f5" d="M5 7h9v10H5z"/><path d="M9 7V1M7 3l2-2 2 2M1 17h17" stroke="currentColor"/></g>
<g id="swp" transform="translate(-10 -10)"><path fill="#5fb4f5" d="M2 2h10v6l6 2v4H8V8L2 7z"/><rect x="7" y="9" width="8" height="9" fill="#e8e8e8"/></g>
<g id="lof" transform="translate(-10 -10)"><path fill="#e8e8e8" d="M2 6c5-4 11-4 16 0v10H2z"/><ellipse cx="10" cy="6" rx="7" ry="2.500" fill="#3a4454" stroke="#5fb4f5"/><path fill="#5fb4f5" d="M2 10h16v5H2z" opacity=".7"/></g>
<g id="prs" transform="translate(-10 -10)"><path fill="#5fb4f5" d="M2 2h16l-4 10H6z"/><circle cx="10" cy="14" r="4.500" fill="#ccc"/></g>
<g id="u3" transform="translate(-10 -10)"><path d="M10 2l7 4v8l-7 4-7-4V6z" stroke="currentColor"/><path d="M10 10v8" stroke="#3bc46b"/><path d="M10 10l7 4" stroke="#e85a5a"/><path d="M10 2v8" stroke="#5fb4f5"/></g>
<g id="glo" transform="translate(-10 -10)"><ellipse cx="10" cy="10" rx="8" ry="9" stroke="#e85a5a"/><ellipse cx="10" cy="10" rx="4" ry="9" stroke="#3bc46b"/><rect x="7" y="7" width="6" height="6" stroke="#5fb4f5"/><path d="M2 10h16" stroke="#5fb4f5"/></g>
<g id="st2" transform="translate(-10 -10)"><path fill="#e8e8e8" d="M3 3h5v9h9v6H3z"/><path fill="#5fb4f5" d="M8 5l6 5h4l-6 2H8z"/></g>
<g id="gd3" transform="translate(-10 -10)"><path d="M9 2h8v8H9z" fill="#5fb4f5"/><path fill="#e8e8e8" d="M2 9h7v9H2z"/><path fill="#5fb4f5" d="M10 11h8v7h-8z"/><path d="M13 2v16M2 8h16" stroke="#3a4454"/></g>
<g id="cir" transform="translate(-10 -10)"><rect x="3" y="2" width="10" height="11" stroke="currentColor" stroke-width="1.200"/><circle cx="12" cy="12" r="6" stroke="currentColor" stroke-width="1.200"/></g>
<g id="ma" transform="translate(-10 -10)"><circle cx="10" cy="10" r="8" fill="#bcd8f0"/><path d="M5 16L10 4l5 12M7 11h6" stroke="#5fb4f5" stroke-width="1.300"/></g>
<g id="mb" transform="translate(-10 -10)"><circle cx="10" cy="10" r="8" stroke="currentColor" stroke-width="1.300"/><path d="M5 16L10 4l5 12M7 11h6" stroke="currentColor"/></g>
<g id="mc" transform="translate(-10 -10)"><circle cx="10" cy="10" r="8.500" fill="#2b8fe4"/><ellipse cx="8" cy="7" rx="3.500" ry="3" fill="#8fcbf7"/></g>
<g id="md" transform="translate(-10 -10)"><circle cx="10" cy="10" r="8.500" fill="#c66a27"/><path fill="#3c8dd0" d="M2 9c2 9 14 9 16 0 1 5-3 9.500-8 9.500S1 14 2 9z"/></g>
<g id="me" transform="translate(-10 -10)"><circle cx="9" cy="9" r="8" fill="#c8c8c8"/><path d="M4 15L9 3l5 12" stroke="#555"/><rect x="10" y="11" width="9" height="8" fill="#e8e8e8" stroke="#3a4454"/><path d="M12 14h5M12 16.500h5" stroke="#3a4454"/></g>
<!-- black panel icons -->
<g id="cubeblue" transform="translate(-12 -12)"><path fill="#bcc6d0" stroke="#222" d="M3 7l9 5v11l-9-5z"/><path fill="#0f6ab4" stroke="#222" d="M21 7l-9 5v11l9-5z"/><path fill="#4aa0dc" stroke="#222" d="M12 1l9 6-9 5-9-5z"/></g>
<g id="cubered" transform="translate(-12 -12)"><path fill="#e00" stroke="#222" d="M3 7l9 5v11l-9-5z"/><path fill="#0f6ab4" stroke="#222" d="M21 7l-9 5v11l9-5z"/><path fill="#4aa0dc" stroke="#222" d="M12 1l9 6-9 5-9-5z"/><path d="M8 10v10" stroke="#fff" stroke-width="1.500"/></g>
<g id="lay" transform="translate(-12 -12)"><path fill="#fff" stroke="#111" d="M3 17l9 6 9-6-9-5z"/><path fill="#fff" stroke="#111" d="M3 13l9 6 9-6-9-5z"/><path fill="#3a8cc9" stroke="#111" d="M12 1l9 6-9 6-9-6z"/></g>
<g id="tools" transform="translate(-12 -12)"><path d="M3 4l2-2 18 19-2 2z" fill="#fff" stroke="#111"/><path d="M21 3l-4 1-13 16-2 3 3-1L18 7z" fill="#fff" stroke="#111"/><path fill="#bbb" stroke="#111" d="M11 5l5-3 6 3-2 4-3-2z"/></g>
<g id="iso4" transform="translate(-12 -12)"><rect x="1" y="1" width="22" height="22" stroke="#2f7fc4" stroke-width="2" stroke-dasharray="4 2"/><rect x="5" y="5" width="14" height="14" fill="#bbb" stroke="#111" stroke-width="1.500"/></g>
<g id="eye" transform="translate(-12 -12)"><path d="M1 12c5-8 17-8 22 0-5 8-17 8-22 0z" fill="#fff" stroke="#111" stroke-width="1.600"/><circle cx="12" cy="12" r="4.500" fill="#2f5f8f" stroke="#111" stroke-width="1.600"/></g>
<g id="eyex" transform="translate(-12 -12)"><use href="#eye" x="12" y="12"/><path d="M20 2L4 22" stroke="#111" stroke-width="2"/></g>
<g id="gear" transform="translate(-12 -12)"><circle cx="12" cy="12" r="7" stroke="currentColor" stroke-width="4"/><path d="M12 1v4M12 19v4M1 12h4M19 12h4M4 4l3 3M17 17l3 3M20 4l-3 3M7 17l-3 3" stroke="currentColor" stroke-width="4"/></g>
<g id="docb" transform="translate(-12 -12)"><path d="M6 2h12v19l-2 2H6z" fill="#fff" stroke="#111" stroke-width="1.600"/><path d="M8 5h8" stroke="#3a8cc9" stroke-width="2"/><rect x="10" y="9" width="4" height="3" fill="#888"/><rect x="10" y="14" width="3" height="4" stroke="#3a8cc9"/></g>
<g id="docg" transform="translate(-12 -12)"><path d="M2 2h11v8h9v12H2z" fill="#fff" stroke="#111" stroke-width="1.300"/><path d="M13 2v8h9" stroke="#2aa52a" stroke-width="1.500"/><path d="M5 16h14" stroke="#3a8cc9" stroke-dasharray="2 1"/></g>
<g id="marker" transform="translate(-12 -12)"><path d="M5 16L17 1l5 4-13 16z" fill="#111"/><path d="M1 22h14" stroke="#111" stroke-width="2"/><path d="M3 19l2-4 5 4-4 1z" fill="#111"/></g>
<g id="cab" transform="translate(-12 -12)"><rect x="2" y="3" width="17" height="18" stroke="#333" stroke-width="1.400"/><path d="M10 3v18M6 12h8" stroke="#333"/><path d="M22 1v24" stroke="#3a8cc9" stroke-width="1.500" stroke-dasharray="3 1"/></g>
<g id="mvb" transform="translate(-12 -12)"><path fill="#111" d="M12 0l4 4h-3v7h7V8l4 4-4 4v-3h-7v7h3l-4 4-4-4h3v-7H4v3l-4-4 4-4v3h7V4H8z"/></g>
<g id="mib" transform="translate(-12 -12)"><path d="M11 2L2 21h9z" fill="#fff" stroke="#777"/><path d="M13 2l9 19h-9z" fill="#a8cdec" stroke="#5a92c4"/></g>
<g id="flop" transform="translate(-12 -12)"><path fill="#111" d="M2 2h20v20H2z"/><rect x="5" y="4" width="14" height="8" fill="#4a9ade"/><rect x="7" y="15" width="10" height="7" fill="#fff"/><rect x="9" y="18" width="3" height="4" fill="#111"/></g>
<g id="grd" transform="translate(-12 -12)"><rect x="1" y="1" width="22" height="23" fill="#fff" stroke="#777" stroke-width="1.400"/><path d="M4 5h9v11H4zM8.500 5v11M4 10.500h9" stroke="#6aa9dc"/></g>
<g id="brm" transform="translate(-12 -12)"><path d="M10 12l9-11 5 4-9 11z" fill="#111"/><path d="M7 19l4-7 5 4-5 5z" fill="#e0913a"/><path d="M1 23l5-4h4l-3 4zM12 23l4-4v4z" fill="#111"/></g>
<g id="clip" transform="translate(-12 -12)"><path d="M2 4h18v20H2z" fill="#fff" stroke="#111" stroke-width="1.800"/><path d="M7 1h8v5H7z" fill="#111"/><rect x="11" y="12" width="12" height="10" fill="#bbb" stroke="#111" stroke-width="1.500"/></g>
<g id="win" transform="translate(-12 -12)"><rect x="1" y="2" width="23" height="20" fill="#fff" stroke="#111" stroke-width="1.800"/><path d="M2 4h21" stroke="#3a8cc9" stroke-width="2.500"/><rect x="10" y="9" width="7" height="7" stroke="#111" stroke-width="1.800"/><path d="M3 13h7M17 13h6M13 5v4M13 16v6" stroke="#111"/></g>
<g id="clipp" transform="translate(-12 -12)"><path d="M6 5h17v18H6v-4M6 5v6" stroke="#111" stroke-width="1.800"/><path d="M12 2h6v5h-6z" fill="#111"/><path d="M1 11l3-2 9 10-3 3z" fill="#111"/></g>
<g id="fo" transform="translate(-12 -12)"><path fill="#111" d="M3 11V6h6l2 2h10v3zM5 12h18l-4 9H1z"/></g>
<g id="sq" transform="translate(-12 -12)"><path d="M1 1h6v17h17v6H1z" fill="#f0e800" stroke="#111" stroke-width="1.700"/><circle cx="16" cy="9" r="6.500" fill="#fff" stroke="#111" stroke-width="1.700"/><rect x="13" y="6" width="6" height="6" fill="#fff" stroke="#111"/><path d="M16 0v3M16 15v3M7 9h3M22 9h3" stroke="#111" stroke-width="1.700"/></g>
<g id="dgp" transform="translate(-12 -12)"><path d="M3 1h14l4 4v18H3z" fill="#fff" stroke="#111" stroke-width="1.600"/><path d="M6 6h12M6 9h14M6 12h12M6 15h5M6 18h3" stroke="#0a8a0a" stroke-width="2"/><path d="M16 12h4v4h4v4h-4v4h-4v-4h-4v-4h4z" fill="#111"/></g>
<g id="dgu" transform="translate(-12 -12)"><path d="M3 1h14l4 4v18H3z" fill="#fff" stroke="#111" stroke-width="1.600"/><path d="M6 6h12M6 9h14M6 12h12M6 15h5M6 18h3" stroke="#0a8a0a" stroke-width="2"/><path d="M18 11l6 6h-3v7h-6v-7h-3z" fill="#111"/></g>
<g id="prn" transform="translate(-12 -12)"><path d="M6 1h12v6H6z" stroke="#111" stroke-width="1.800" fill="#fff"/><path d="M1 7h22v10H1z" fill="#222"/><rect x="6" y="12" width="12" height="11" fill="#fff" stroke="#111" stroke-width="1.800"/><path d="M8 15h8M8 18h8" stroke="#444"/></g>
</defs>

<!-- tabs -->
<g>
<path d="M25 74c6 0 7-4 9-11 2-7 5-11 12-11h82c7 0 10 4 12 11 2 7 3 11 9 11z" fill="#2d3542"/>
<path d="M148 74c6 0 7-4 9-11 2-7 5-11 12-11h82c7 0 10 4 12 11 2 7 3 11 9 11z" fill="#2d3542"/>
<path d="M271 74c6 0 7-4 9-11 2-7 5-11 12-11h82c7 0 10 4 12 11 2 7 3 11 9 11z" fill="#2d3542"/>
<path d="M393 75c6 0 7-5 9-12 2-7 5-11 12-11h82c7 0 10 4 12 11 2 7 3 12 9 12z" fill="#3a4454"/>
<path d="M523 74c3 0 3-2 5-10 2-8 4-10 8-10h16v20z" fill="#2d3542"/>
<path d="M536 60v9M531.500 64.500h9" stroke="#aab" stroke-width="2"/>
<path d="M251 60l8 9M259 60l-8 9M374 60l8 9M382 60l-8 9M496 60l8 9M504 60l-8 9" stroke="#c3c6ca" stroke-width="2"/>
</g>
<!-- logo -->
<defs><linearGradient id="lg" x1="0" y1="0" x2="0" y2="1"><stop offset="0" stop-color="#dcdcdc"/><stop offset="1" stop-color="#858585"/></linearGradient></defs>
<rect x="5.500" y="5.500" width="38" height="38" fill="url(#lg)" stroke="#666"/>
<path d="M31 22h12v12H37c-5-1-12-2-9-7z" fill="#7c7c7c"/>
<path d="M25 11L8 35c9-2 20-3 29-1-5-1-12-2-9-7 1-2 3-3 4-5z" fill="#1c5cc4"/>
<path d="M33 24h8l-4 4z" fill="#222"/>
<!-- QAT -->
<g transform="translate(0 15)">
<use href="#new" x="61"/><use href="#open" x="86"/><use href="#save" x="110"/><use href="#undo" x="135"/><use href="#dd" x="151"/><use href="#redo" x="170" style="color:#6b7280"/><use href="#dd" x="187" style="color:#8a8f97"/><use href="#print" x="206"/><use href="#match" x="231"/><path d="M246-3h8" stroke="#d6d8da"/><path d="M246 1h8l-4 4z" fill="#d6d8da"/>
</g>
<!-- window controls -->
<g stroke="#e8e8e8" stroke-width="1.500">
<path d="M1843 23h8M1868 10h11v11h-11zM1892 10l11 11M1903 10l-11 11"/>
<path d="M1862 52h8M1879 41h8v10h-8zM1883 41v-4h7v9h-3M1896 35l11 11M1907 35l-11 11"/>
</g>
<!-- row 1 -->
<g transform="translate(0 90)">
<use href="#gr" x="9"/><use href="#new" x="24"/><use href="#open" x="47"/><use href="#save" x="70" style="color:#aeb2b6"/><use href="#s" x="85"/><use href="#print" x="99"/><use href="#prev" x="122"/><use href="#plot" x="144"/><use href="#pub" x="169"/><use href="#s" x="183"/><use href="#cut" x="197"/><use href="#copy" x="220"/><use href="#paste" x="243"/><use href="#match" x="267"/><use href="#bed" x="289"/><use href="#s" x="304"/><use href="#undo" x="319"/><use href="#dd" x="337"/><use href="#redo" x="354"/><use href="#dd" x="373"/><use href="#s" x="382"/><use href="#pan" x="395"/><use href="#zrt" x="418"/><use href="#zwin" x="442"/><use href="#zpr" x="465"/><use href="#s" x="480"/><use href="#prp" x="494"/><use href="#dc" x="517"/><use href="#tp" x="540"/><use href="#sh" x="562"/><use href="#mk" x="586"/><use href="#calc" x="609"/><use href="#s" x="624"/>
<circle cx="640" cy="0" r="8.500" fill="#d6d8da"/><text x="636" y="5" font-family="Liberation Sans" font-weight="bold" font-size="13" fill="#3a4454">?</text>
<use href="#gr" x="655"/><use href="#lyr" x="671"/>
<path d="M695-9a5 5 0 0 1 5 5c0 3-2 4-2.500 7h-5c-.5-3-2.500-4-2.500-7a5 5 0 0 1 5-5z" fill="#f5a500"/><rect x="692" y="4" width="6" height="4" fill="#f5a500"/>
<circle cx="711" cy="0" r="4.500" fill="#f5a500"/><path d="M711-9v4M711 5v4M702 0h4M716 0h4M705-6l2.500 2.500M714.500 3.500L717 6M717-6l-2.500 2.500M707.500 3.500L705 6" stroke="#f5a500" stroke-width="1.200"/>
<path d="M726-4v-4h4M736-8h4v4M726 4v4h3M740 4" stroke="#555" stroke-width="1.300"/><rect x="729" y="-5" width="10" height="10" stroke="#777" fill="#bbb"/><circle cx="736" cy="4" r="3" fill="#f5a500"/>
<rect x="746" y="-3" width="12" height="10" fill="#f5a500"/><path d="M754-3v-3a3.500 3.500 0 0 1 7 0v2" stroke="#f5a500" stroke-width="2"/>
<rect x="763.500" y="-5.500" width="12" height="12" fill="#e00" stroke="#000"/>
<use href="#ch" x="975" style="color:#555"/>
<use href="#lyb" x="994"/><use href="#lyp" x="1018"/><use href="#lyr" x="1040"/>
<use href="#gr" x="1058"/><use href="#ruler" x="1073"/><use href="#cube2" x="1095"/><use href="#s" x="1111"/><use href="#info" x="1126"/><use href="#q" x="1148"/>
<use href="#gr" x="1166"/><use href="#mk" x="1181"/><use href="#fr" x="1203"/><use href="#fr2" x="1227"/><use href="#fr3" x="1250"/><use href="#fr4" x="1273"/><use href="#s" x="1288"/><use href="#ch" x="1381" style="color:#aaa"/>
<use href="#gr" x="1397"/><use href="#ord1" x="1413"/><use href="#ord2" x="1435"/><use href="#ord3" x="1458"/><use href="#ord4" x="1481"/>
<use href="#gr" x="1498"/><use href="#pm" x="1515"/><use href="#pm" x="1537"/><path d="M1532-10v6M1529-7h6" stroke="#3bc46b" stroke-width="2"/><use href="#pm" x="1561"/><path d="M1556-10l5 5M1561-10l-5 5" stroke="#e85a5a" stroke-width="1.600"/><use href="#s" x="1575"/><use href="#pm" x="1588"/><path d="M1596-9v18" stroke="#5fb4f5"/><use href="#pm" x="1611"/><use href="#s" x="1627"/>
<path d="M1639-7l-5 13 5-3 5 3z" fill="#1f87e0"/><use href="#ch" x="1742" style="color:#444"/><use href="#pm" x="1760"/>
<use href="#gr" x="1779"/><use href="#A" x="1794"/><use href="#Au" x="1817"/><use href="#Ap" x="1839"/><use href="#Am" x="1863"/><use href="#abc" x="1885"/><use href="#A" x="1906"/>
</g>
<!-- row 2 -->
<g transform="translate(0 117)">
<use href="#gr" x="9"/><use href="#line" x="24"/><use href="#xl" x="47"/><use href="#pl" x="70"/><use href="#pg" x="93"/><use href="#rc" x="116"/><use href="#ar" x="140"/><use href="#cr" x="162"/><use href="#cl" x="185"/><use href="#sp" x="208"/><use href="#el" x="231"/><use href="#ea" x="254"/><use href="#bi" x="278"/><use href="#bm" x="300"/><use href="#pt" x="323"/><use href="#ht" x="346"/><use href="#gd" x="369"/><use href="#rg" x="392"/><use href="#tbl" x="415"/><use href="#A" x="438" style="color:#e8e8e8"/>
<use href="#gr" x="456"/><use href="#dl" x="471"/><use href="#da" x="494"/><use href="#dr" x="517"/><use href="#do" x="540"/><use href="#s" x="555"/><use href="#dra" x="569"/><use href="#dra" x="592"/><use href="#dd2" x="615"/><use href="#dra" x="640"/><use href="#s" x="653"/><use href="#dq" x="667"/><use href="#dl" x="690"/><use href="#db" x="712"/><use href="#ds" x="736"/><use href="#dbk" x="758"/><use href="#s" x="775"/><use href="#tol" x="788"/><use href="#ctr" x="811"/><use href="#dck" x="834"/><use href="#wav" x="857"/><use href="#s" x="873"/><use href="#dp" x="886"/><use href="#dA" x="909"/><use href="#dg" x="932"/><use href="#s" x="947"/><use href="#ch" x="1043" style="color:#555"/><use href="#dp" x="1061"/>
<use href="#gr" x="1080"/><use href="#ducs" x="1094"/><use href="#ducs" x="1117"/><use href="#ducs" x="1140"/>
<use href="#gr" x="1157"/><use href="#ucs" x="1173"/><use href="#ucm" x="1196"/><use href="#s" x="1211"/><use href="#w" x="1229" style="color:#555"/><use href="#ch" x="1381" style="color:#555"/>
<use href="#gr" x="1395"/><use href="#zpr" x="1410"/><use href="#s" x="1425"/><use href="#v1" x="1439"/><use href="#v2" x="1462"/><use href="#v1" x="1485"/><use href="#v1" x="1508"/><use href="#v3" x="1531"/><use href="#v4" x="1554"/><use href="#s" x="1569"/><use href="#iso2" x="1583"/><use href="#iso3" x="1605"/><use href="#iso2" x="1628"/><use href="#iso3" x="1651"/><use href="#s" x="1667"/><use href="#cam" x="1680"/><use href="#s" x="1696"/><use href="#vp" x="1710"/><use href="#ch" x="1814" style="color:#aaa"/>
</g>
<!-- row 3 -->
<g transform="translate(0 144)">
<use href="#gr" x="9"/><use href="#er" x="24"/><use href="#cp" x="47"/><use href="#mi" x="69"/><use href="#of" x="93"/><use href="#ay" x="116"/><use href="#mv" x="139"/><use href="#ro" x="162"/><use href="#sc" x="185"/><use href="#st" x="208"/><use href="#tr" x="231"/><use href="#ex" x="254"/><use href="#br" x="277"/><use href="#br2" x="300"/><use href="#jn" x="322"/><use href="#cf" x="346"/><use href="#fl" x="369"/><use href="#xp" x="392"/>
<use href="#gr" x="409"/><use href="#zo" x="424"/><use href="#zo2" x="448"/><use href="#zo3" x="471"/><use href="#zo4" x="494"/><use href="#zo5" x="517"/><use href="#s" x="532"/><use href="#zp" x="545"/><use href="#zm" x="569"/><use href="#s" x="584"/><use href="#zd" x="597"/><use href="#zx" x="620"/><use href="#gr" x="637"/>
<rect x="645.500" y="-6.500" width="12" height="13" fill="#e00" stroke="#000"/><use href="#ch" x="735" style="color:#555"/><path d="M754 .5h60" stroke="#000"/><use href="#ch" x="906" style="color:#555"/><path d="M925 .5h35" stroke="#000" stroke-width="1.300"/><use href="#ch" x="1042" style="color:#555"/><use href="#ch" x="1173" style="color:#aaa"/>
<path d="M746-11v22M917-11v22M1052-11v22" stroke="#cfd3d8"/>
<use href="#gr" x="1186"/><use href="#b1" x="1202"/><use href="#b2" x="1225"/><use href="#wd" x="1247"/><use href="#cn" x="1271"/><use href="#sph" x="1294"/><use href="#cy" x="1317"/><use href="#to" x="1340"/><use href="#py" x="1363"/><use href="#hx" x="1386"/><use href="#ps" x="1409"/><use href="#s" x="1424"/><use href="#ext" x="1437"/><use href="#plp" x="1461"/><use href="#swp" x="1484"/><use href="#lof" x="1507"/><use href="#prs" x="1530"/><use href="#s" x="1545"/><use href="#ord3" x="1559"/><use href="#ord4" x="1582"/><use href="#ord2" x="1605"/><use href="#s" x="1620"/><use href="#u3" x="1633"/><use href="#glo" x="1656"/><use href="#st2" x="1680"/><use href="#gd3" x="1703"/>
<use href="#gr" x="1720"/><use href="#cir" x="1735"/><use href="#s" x="1751"/><use href="#ma" x="1764"/><use href="#mb" x="1787"/><use href="#mc" x="1811"/><use href="#md" x="1834"/><use href="#s" x="1849"/><use href="#me" x="1863"/>
</g>
<!-- drawing -->
<g shape-rendering="crispEdges" stroke-width="1">
<path d="M259.500 409.500H1013.500V582M259.500 409.500V582M259.500 582H1013.500" stroke="#ffff00"/>
<path d="M265 412L260 536M265 412.500L309.500 414V409.500H320L1013 440L1007 581M260 547L1011 582" stroke="#00ff00" stroke-width="1.200"/>
<path d="M259.500 514V582" stroke="#fff"/><path d="M260 581.500H310" stroke="#ffff80" stroke-width="1.500"/>
</g>
<rect x="255.500" y="576.500" width="9" height="9" stroke="#fff" stroke-width="1"/>
<path d="M261.700 515L267.300 521L273.700 515.300M267.300 521V527M314 567L327 579.500M327 567L314 579.500" stroke="#fff"/>
<circle cx="1013" cy="582" r="3.500" stroke="#ffff00"/><path d="M1015 575v13" stroke="#ff00ff" stroke-width="2"/><path d="M663 422v10" stroke="#ff00ff" stroke-width="2"/>
<text x="1019" y="588.500" font-family="Liberation Sans" font-weight="bold" font-size="7" fill="#ff00ff">2.5</text>
<text x="666" y="429" font-family="Liberation Sans" font-weight="bold" font-size="7.500" fill="#ff00ff">2.25</text>
<!-- viewcube -->
<circle cx="1203" cy="208" r="31.500" stroke="#3c3c3c" stroke-width="7"/>
<rect x="1188.500" y="193.500" width="29" height="29" fill="#a6a6a6" stroke="#bbb"/><rect x="1194" y="199" width="18" height="18" fill="#8e8e8e"/>
<g font-family="Liberation Sans" font-weight="bold" fill="#c0c0c0" font-size="13.500" text-anchor="middle">
<text x="1203" y="181">N</text><text x="1170" y="213">W</text><text x="1236" y="213">E</text><text x="1203" y="246">S</text></g>
<text x="1203" y="211" font-family="Liberation Sans" font-size="7" fill="#3c3c3c" text-anchor="middle">TOP</text>
<rect x="1178.500" y="259.500" width="47" height="17" rx="4" fill="#7a7a82" stroke="#999"/>
<text x="1183" y="272" font-family="Liberation Sans" font-size="11" fill="#c8c8d0">WCS</text>
<path d="M1212 266h10l-5 4z" fill="#aaa"/>
<!-- scrollbar arrows -->
<g stroke="#555" stroke-width="1.500"><path d="M1256 172l4-4 4 4M1256 878l4 4 4-4M14 894l-4 4 4 4M1241 894l4 4-4 4"/></g>
<g stroke="#555" stroke-width="1.500"><path d="M1285 925l-4 4 4 4M1467 925l4 4-4 4M1459 943l-4 4 4 4M1471 943l4 4-4 4M1492 951l-4 4 4 4M1501 951l4 4-4 4"/></g>
<!-- command strip -->
<path d="M8 913h17M8 916h17" stroke="#fff" stroke-dasharray="1.400 1.200" stroke-width="1.500"/>
<path d="M11 925l8 8M19 925l-8 8" stroke="#dfe1e3" stroke-width="2"/>
<path d="M9 960l7-7c-1-3 1-6 5-6l-2 3 2 2 3-2c0 4-3 6-6 5l-7 7z" fill="#e4e6e8"/>
<rect x="33.500" y="953.500" width="15" height="11" fill="#f6f6f6" stroke="#555"/><path d="M33 956h16" stroke="#555" stroke-width="2"/><path d="M36 959l2 1.500-2 1.500M40 962h4" stroke="#444"/>
<path d="M52 957h7l-3.500 4z" fill="#666"/>
<!-- layout tabs -->
<path d="M15 970h60c-2 0-5 3-6 10-1 5-3 7-7 7H30c-4 0-6-2-8-7-1-6-4-10-7-10z" fill="#3a4454"/>
<path d="M75 987c5 0 5-5 7-11 1-4 3-6 5-6h50v11c0 4-2 6-6 6z" fill="#2d3542"/>
<path d="M138 987c5 0 5-5 7-11 1-4 3-6 5-6h52v11c0 4-2 6-6 6z" fill="#2d3542"/>
<path d="M207 987c5 0 6-5 8-11 1-4 3-6 5-6h10v11c0 4-3 6-6 6z" fill="#2d3542"/>
<path d="M219 974v8M215 978h8" stroke="#aab0b8" stroke-width="2"/>
<!-- parts / panel grips -->
<path d="M1277 165v14M1279 165v14M1490 165v14M1492 165v14" stroke="#aab" stroke-dasharray="1 1"/>
<!-- left strip icons -->
<path d="M1488 188h18" stroke="#888" stroke-dasharray="1.500 1.500"/>
<g style="color:#111">
<g transform="translate(1497.500 204) scale(.62)"><use href="#gear"/></g>
<use href="#docb" x="1497" y="237"/><use href="#docg" x="1497" y="267"/><use href="#marker" x="1497" y="299"/><use href="#cab" x="1496" y="333"/><use href="#mvb" x="1497" y="361"/><use href="#mib" x="1497" y="392"/><use href="#gear" x="1497" y="423"/><use href="#cubered" x="1497" y="454"/><use href="#flop" x="1497" y="485"/><use href="#grd" x="1497" y="516"/><use href="#brm" x="1497" y="548"/>
</g>
<!-- list icons -->
<use href="#cubeblue" x="1526" y="249"/><use href="#lay" x="1526" y="278"/><use href="#tools" x="1526" y="307"/><use href="#cubered" x="1526" y="336"/><use href="#iso4" x="1526" y="365"/><use href="#eyex" x="1526" y="394"/><use href="#eye" x="1526" y="423"/>
<!-- right column -->
<circle cx="1887" cy="199" r="11" fill="#808080"/><text x="1881.500" y="206" font-family="Liberation Sans" font-weight="bold" font-size="19" fill="#ddd">?</text>
<g fill="#fff" stroke="#fff">
<path d="M1877 238l12-15 7 6-14 14zM1876 243h20" stroke-width="1"/>
<g fill="none" stroke-width="2"><path d="M1880 275c-6-6-3-17 7-18 10-1 14 10 10 16-3 5-10 5-12 0-1-4 1-8 5-8 3 0 5 3 3 6"/></g>
<path d="M1887 293l11 6-11 6-11-6z"/><path d="M1876 301l10 6v9l-10-6zM1898 301l-10 6v9l10-6z" opacity=".65"/>
<path fill-rule="evenodd" d="M1875 333h6l2-3h8l2 3h6v15h-24zM1887 336a4.500 4.500 0 1 0 .01 0z"/>
<path d="M1875 368h8l2 2h6v-5l7 1v12h-23z" stroke="none" opacity=".9"/><path d="M1895 374l1.500 5 5 .5-4 3 1.500 5-4.500-3-4.500 3 1.500-5-4-3 5-.5z" stroke="#0b79cd"/>
</g>
<g transform="translate(1887.500 412) scale(.85)" style="color:#fff"><use href="#gear"/></g>
<path d="M1872 434h30" stroke="#aaa" stroke-width="2" stroke-dasharray="2 2"/>
<use href="#clip" x="1887" y="454"/><use href="#win" x="1887" y="485"/><use href="#clipp" x="1887" y="516"/><use href="#fo" x="1887" y="552"/><use href="#sq" x="1887" y="580"/><use href="#dgp" x="1887" y="608"/><use href="#dgu" x="1887" y="636"/><use href="#prn" x="1887" y="664"/>
<!-- status icons -->
<g transform="translate(0 1003)" stroke-width="1.300">
<path d="M1274-7h16M1274-2h16M1274 3h16M1278-11v16M1283-11v16M1288-11v16" stroke="#d6d8da"/>
<path d="M1301-7h12M1301-2h12M1301 3h12" stroke="#d6d8da" stroke-dasharray="2 3" stroke-width="2"/>
<use href="#dd" x="1327"/>
<path d="M1343-10V9H1358" stroke="#d6d8da"/><circle cx="1347" cy="6" r="1" fill="#d6d8da"/>
<circle cx="1374" cy="1" r="7" stroke="#fff"/><path d="M1370 5l10-14M1374 1h7" stroke="#fff"/>
<use href="#dd" x="1394"/>
<path d="M1409-10l10 20" stroke="#e85a5a"/><path d="M1414-10v18M1410 9h8" stroke="#3bc46b"/><use href="#dd" x="1433"/>
<path d="M1447 8l12-12M1447 8h14" stroke="#fff" stroke-width="1.500"/>
<rect x="1472.500" y="-6.500" width="14" height="15" stroke="#fff" stroke-width="1.500"/><rect x="1470" y="-10" width="5" height="5" fill="#5a8fc6" stroke="#fff"/>
<use href="#dd" x="1499"/>
<path d="M1523-10l-4 11-4 8 8-5 8 5-4-8z" fill="#fff"/><circle cx="1530" cy="-6" r="2.500" stroke="#fff"/>
<path d="M1546-10l-3 11-4 8 7-5 7 5-4-8z" fill="#d6d8da"/><path d="M1552-8l3-2v3l3 1-3 1-1 3-1-3z" fill="#d6d8da"/>
<path d="M1570-9l-3 10-4 8 7-5 7 5-4-8z" fill="#d6d8da"/>
<use href="#dd" x="1607"/>
<g transform="translate(1630 0) scale(.62)" style="color:#c8cbcf"><use href="#gear"/></g>
<use href="#dd" x="1718"/>
<path d="M1739-9V9M1730 0h18" stroke="#fff" stroke-width="1.800"/>
<path d="M1759-10h7v7h-7z" stroke="#d6d8da"/><circle cx="1772" cy="-6" r="3" stroke="#d6d8da"/><path d="M1766 2l-4 7h8z" stroke="#d6d8da"/>
<path d="M1790-8h12v5h-12zM1787-3h18v7h-18zM1790 1h12v6h-12z" stroke="#d6d8da"/><rect x="1790" y="4" width="12" height="4" fill="#f08a3c"/>
<path d="M1812-3l6-7 7 5-6 9h-7z" fill="#3d9ae0"/><rect x="1812" y="2" width="7" height="7" fill="#f2c233"/><path d="M1819 4l3 4 6-8" stroke="#3bc46b" stroke-width="2"/>
<rect x="1834" y="-10" width="15" height="14" fill="#889"/><path d="M1835-2l4-5 4 6 4-5" stroke="#fff"/><path d="M1846-1l-5 10h10z" fill="#f08a3c"/>
<rect x="1864.500" y="-8.500" width="15" height="14" stroke="#fff"/><path d="M1867 2l4-4M1872-6h4v4M1867 2h3M1867-1v3" stroke="#fff"/>
<path d="M1888-9h16M1888-1h16M1888 8h16" stroke="#fff" stroke-width="2"/>
</g>
<!-- popup -->
<path d="M1622 903.500h216a14 14 0 0 1 14 14v51a14 14 0 0 1-14 14h-40l-1 17-19-17h-156a14 14 0 0 1-14-14v-51a14 14 0 0 1 14-14z" fill="#ffffe1" stroke="#000" stroke-width="1.200"/>
<circle cx="1624" cy="921" r="8" fill="#1f55b8"/><circle cx="1622" cy="918" r="4" fill="#7aa4e6"/><rect x="1623" y="919" width="2.500" height="7" fill="#fff"/><rect x="1623" y="915.500" width="2.500" height="2.500" fill="#fff"/>
<rect x="1829.500" y="913.500" width="14" height="15" fill="#fff" stroke="#888"/><path d="M1833 917.500l7 7M1840 917.500l-7 7" stroke="#000" stroke-width="2"/>
</svg>

<!-- text -->
<div class="t" style="left:966px;top:6px;color:#f0f0f0">Toolbox&nbsp;&nbsp; Part_1 Row 1.dwg</div>
<div class="t ml" style="left:59px;top:31px">File</div>
<div class="t ml" style="left:101px;top:31px">Edit</div>
<div class="t ml" style="left:145px;top:31px">View</div>
<div class="t ml" style="left:194px;top:31px">Insert</div>
<div class="t ml" style="left:247px;top:31px">Format</div>
<div class="t ml" style="left:309px;top:31px">Tools</div>
<div class="t ml" style="left:362px;top:31px">Draw</div>
<div class="t ml" style="left:413px;top:31px">Dimension</div>
<div class="t ml" style="left:494px;top:31px">Modify</div>
<div class="t ml" style="left:556px;top:31px">Parametric</div>
<div class="t ml" style="left:637px;top:31px">Window</div>
<div class="t ml" style="left:705px;top:31px">Help</div>
<div class="t" style="left:36px;top:56px;color:#c3c6ca">Start</div>
<div class="t" style="left:159px;top:56px;color:#c3c6ca">Drawing1*</div>
<div class="t" style="left:282px;top:56px;color:#c3c6ca">Display Cases*</div>
<div class="t" style="left:405px;top:56px;color:#f0f0f0">Part_1 Row 1*</div>
<div class="t" style="left:781px;top:82px;color:#111;font-size:11px;letter-spacing:-.2px">2D_TEXT</div>
<div class="t" style="top:83px;color:#111;left:1649px">Annotative</div>
<div class="t" style="left:969px;top:109px;color:#111;width:60px">F_1-1-2</div>
<div class="t" style="left:1244px;top:109px;color:#111">World</div>
<div class="t" style="left:663px;top:136px;color:#111">ByLayer</div>
<div class="t" style="left:819px;top:136px;color:#111">ByLayer</div>
<div class="t" style="left:965px;top:136px;color:#111">ByLayer</div>
<div class="t" style="left:1066px;top:136px;color:#888">ByColor</div>
<div class="t" style="left:7px;top:166px;color:#d8d8d8;letter-spacing:.25px">[&minus;][Top][2D Wireframe]</div>
<div class="t" style="left:1286px;top:163px;font-size:11px;color:#dfe1e4;letter-spacing:-.2px">2D TOOLS AND PARTS LIST</div>
<div class="t" style="left:1499px;top:163px;font-size:11px;color:#dfe1e4;letter-spacing:.05px">MICROVELLUM</div>
<div class="t th" style="left:1277px;top:190px">Name</div>
<div class="t th" style="left:1320px;top:190px">Quantity</div>
<div class="t th" style="left:1373px;top:190px">Width</div>
<div class="t th" style="left:1424px;top:190px">Length</div>
<div class="t th" style="left:1277px;top:210px;color:#fff">Part_1</div>
<div class="t th" style="left:1320px;top:210px">1</div>
<div class="t th" style="left:1373px;top:210px">23.5529</div>
<div class="t th" style="left:1424px;top:210px">102.7577</div>
<div class="t mb" style="left:1519px">Company Setup</div>
<div class="t mb" style="left:1622px"><u>T</u>oolbox Setup</div>
<div class="t mb" style="left:1713px">Other</div>
<div class="t mb" style="left:1758px"><u>H</u>elp</div>
<div class="t" style="left:1518px;top:212px;font-size:16px;font-weight:bold;color:#f2f2f2">Solid Modeling</div>
<div class="t li" style="top:241px">Solid Modeling Tools</div>
<div class="t li" style="top:270px">Smart Layer Manager</div>
<div class="t li" style="top:299px">Solid Model Properties</div>
<div class="t li" style="top:328px">Solid Model Analyzer</div>
<div class="t li" style="top:357px">Isolate Selected Solids</div>
<div class="t li" style="top:386px">Hide Selected Solids</div>
<div class="t li" style="top:415px">Show All Solids</div>
<div class="t bb" style="top:823px">Project</div>
<div class="t bb" style="top:847px">Draw</div>
<div class="t bb" style="top:871px">Modify</div>
<div class="t bb" style="top:895px;left:1521px">Solid Modeling</div>
<div class="t bb" style="top:919px">Product Viewer</div>
<div class="t" style="left:1282px;top:942px;color:#111">#E.07 - Parts List</div>
<div class="t" style="left:1385px;top:943px;color:#222;width:68px;overflow:hidden">2D Machining</div>
<div class="t" style="left:31px;top:916px;color:#111;font-family:'Liberation Mono',monospace;font-size:11.500px">Command:</div>
<div class="t" style="left:31px;top:931px;color:#111;font-family:'Liberation Mono',monospace;font-size:11.500px">Command:</div>
<div class="t" style="left:66px;top:951px;color:#777;font-family:'Liberation Mono',monospace;font-size:11.500px;font-style:italic">Type a command</div>
<div class="t" style="left:27px;top:970px;color:#eef0f2;font-weight:bold">Model</div>
<div class="t" style="left:85px;top:970px;color:#c3c6ca">Layout1</div>
<div class="t" style="left:150px;top:970px;color:#c3c6ca">Layout2</div>
<div class="t" style="left:1224px;top:995px;color:#e4e6e8">MODEL</div>
<div class="t" style="left:1581px;top:995px;color:#e4e6e8">1:1</div>
<div class="t" style="left:1648px;top:995px;color:#e4e6e8;letter-spacing:-.45px">Bren Classic</div>
<div class="t" style="left:1642px;top:913px;color:#000;font-weight:bold;letter-spacing:-.3px">Plot and Publish Job Complete</div>
<div class="t" style="left:1622px;top:935px;color:#000">No errors or warnings found</div>
<div class="t" style="left:1622px;top:956px;color:#0000ee;text-decoration:underline">Click to view plot and publish details...</div>
</div></body></html>
